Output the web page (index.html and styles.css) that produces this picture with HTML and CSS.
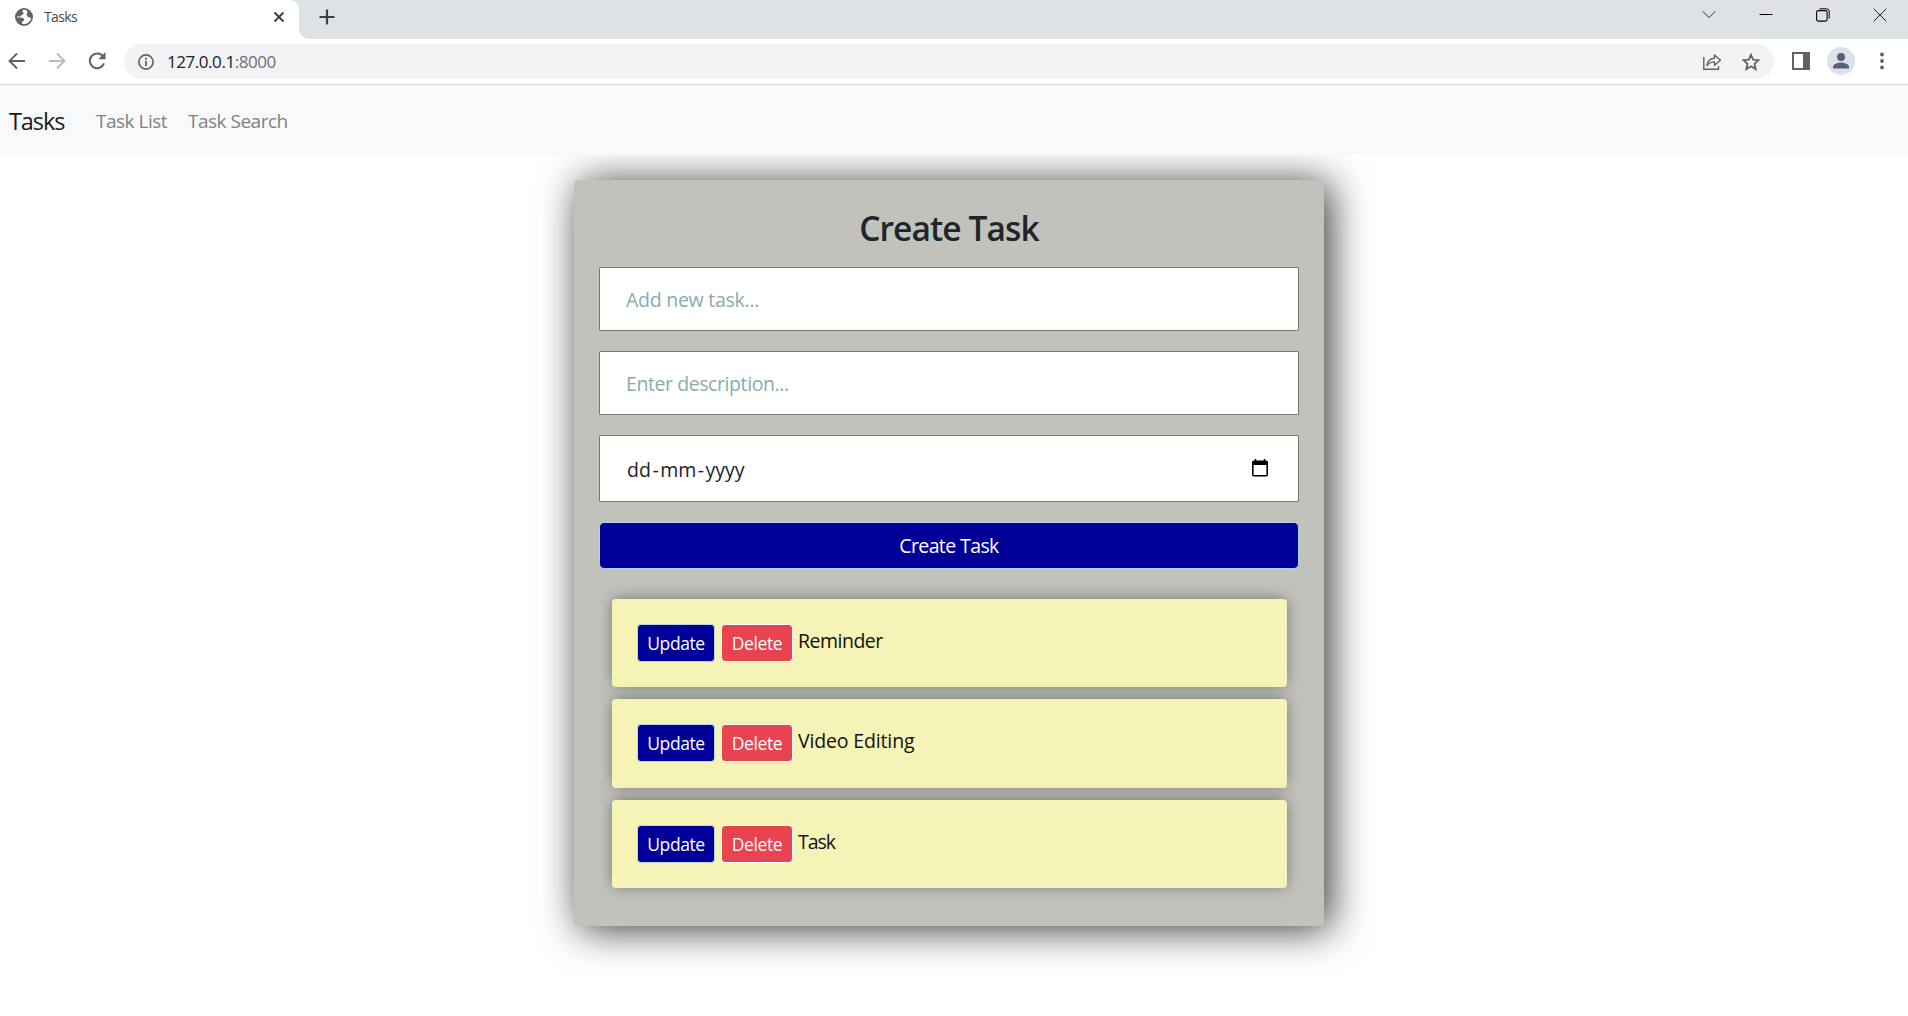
FILE: index.html
```html
<!DOCTYPE html>
<html lang="en">
<head>
<meta charset="utf-8">
<title>Tasks</title>
<link rel="stylesheet" href="styles.css">
</head>
<body>
<header class="browser">
  <div class="tabstrip">
    <div class="tab">
      <svg class="globe" width="18" height="18" viewBox="0 0 18 18"><circle cx="9" cy="9" r="8.1" fill="#fff" stroke="#5f6368" stroke-width="1.8"/><path d="M9 1c-1.500 1-2 2.500-1 3.500 1.200.500.500 1.800-.500 2C6.500 7 5.500 7.500 5.500 8.500H1c0-4 3.500-7.500 8-7.500zM11 1.500l1.500 2.500-1 2.500 1.500 2.500 2 .500 1.500 1.500c1-3-.500-7-5.500-9.500zM1 9.500h5.500c2 .500 3 1.500 2.500 3l-2 1.500v3C4 16 1 13.500 1 9.500z" fill="#5f6368"/></svg>
      <span class="tab-title">Tasks</span>
      <svg class="tab-close" width="12" height="12" viewBox="0 0 12 12"><path d="M1.500 1.500l9 9M10.500 1.500l-9 9" stroke="#3c4043" stroke-width="1.900"/></svg>
    </div>
    <svg class="newtab" width="16" height="16" viewBox="0 0 16 16"><path d="M8 .5v15M.5 8h15" stroke="#3c4043" stroke-width="2.200"/></svg>
    <div class="window-buttons">
      <svg width="14" height="14" viewBox="0 0 14 14"><path d="M.8 3.500L7 9.500l6.200-6" fill="none" stroke="#333"/></svg>
      <svg width="14" height="14" viewBox="0 0 14 14"><path d="M.5 6.500h13" stroke="#000"/></svg>
      <svg width="14" height="14" viewBox="0 0 14 14"><rect x=".6" y="2.600" width="10.500" height="10.500" rx="1.800" fill="none" stroke="#000" stroke-width="1.100"/><path d="M3.500.8h7a2.700 2.700 0 0 1 2.700 2.700v7" fill="none" stroke="#000"/></svg>
      <svg width="14" height="14" viewBox="0 0 14 14"><path d="M.8.8l12.400 12.400M13.200.8L.8 13.200" stroke="#222"/></svg>
    </div>
  </div>
  <div class="toolbar">
    <svg class="nav-icon" width="18" height="18" viewBox="0 0 18 18"><path d="M17 9H2M9 1.500L1.500 9 9 16.500" fill="none" stroke="#5f6368" stroke-width="1.900"/></svg>
    <svg class="nav-icon" width="18" height="18" viewBox="0 0 18 18"><path d="M1 9h15M9 1.500L16.500 9 9 16.500" fill="none" stroke="#b9bbbd" stroke-width="1.900"/></svg>
    <svg class="nav-icon reload" width="18" height="18" viewBox="0 0 18 18"><path d="M15.200 4.800A7.300 7.300 0 1 0 16 11.300" fill="none" stroke="#5f6368" stroke-width="2"/><path d="M17.500 0v7.200h-7.200z" fill="#5f6368"/></svg>
    <div class="omnibox">
      <svg width="16" height="16" viewBox="0 0 16 16"><circle cx="8" cy="8" r="7.100" fill="none" stroke="#5f6368" stroke-width="1.700"/><path d="M8 7v5M8 3.700v2" stroke="#5f6368" stroke-width="1.800"/></svg>
      <span class="url">127.0.0.1<span class="port">:8000</span></span>
      <svg class="share" width="20" height="18" viewBox="0 0 20 18"><path d="M1.800 4v12.300h14.700V13" fill="none" stroke="#5f6368" stroke-width="1.400"/><path d="M5 12.500c.5-4.500 3.200-7 7.500-7.200V2l6 5.200-6 5V8.900C9.200 8.900 7 10 5 12.500z" fill="none" stroke="#5f6368" stroke-width="1.400" stroke-linejoin="round"/></svg>
      <svg class="star" width="18" height="18" viewBox="0 0 18 18"><path d="M9 1.800l2.200 4.900 5.300.5-4 3.600 1.200 5.300L9 13.300l-4.700 2.800 1.200-5.300-4-3.600 5.300-.5z" fill="none" stroke="#5f6368" stroke-width="1.800"/></svg>
    </div>
    <svg class="panel" width="18" height="18" viewBox="0 0 18 18"><path d="M1 1h16v16H1z" fill="#fff" stroke="#5f6368" stroke-width="2"/><path d="M11 1h6v16h-6z" fill="#5f6368"/></svg>
    <svg class="avatar" width="28" height="28" viewBox="0 0 28 28"><circle cx="14" cy="14" r="14" fill="#dee1e6"/><circle cx="14" cy="10" r="4" fill="#55617a"/><path d="M6 21.500v-1.500c0-3 5-4.500 8-4.500s8 1.500 8 4.500v1.500z" fill="#55617a"/></svg>
    <svg class="menu" width="4" height="18" viewBox="0 0 4 18"><circle cx="2" cy="2.500" r="1.900" fill="#5f6368"/><circle cx="2" cy="9" r="1.900" fill="#5f6368"/><circle cx="2" cy="15.500" r="1.900" fill="#5f6368"/></svg>
  </div>
</header>
<nav class="navbar">
  <a class="brand">Tasks</a>
  <a class="link link-list">Task List</a>
  <a class="link link-search">Task Search</a>
</nav>
<main class="card">
  <h1 class="heading"><span>Create Task</span></h1>
  <div class="field"><span class="ph-task">Add new task...</span></div>
  <div class="field"><span class="ph-desc">Enter description...</span></div>
  <div class="field date"><span class="date-text">dd<span class="dash">-</span>mm<span class="dash">-</span>yyyy</span>
    <svg class="calendar" width="16" height="18" viewBox="0 0 16 18"><path d="M3.500 0v3M12.500 0v3" stroke="#000" stroke-width="1.500"/><rect x=".8" y="2.300" width="14.400" height="14.500" rx="1" fill="none" stroke="#000" stroke-width="1.600"/><path d="M1 2h14v4H1z"/></svg>
  </div>
  <button class="submit"><span>Create Task</span></button>
  <ul class="tasks">
    <li class="task"><a class="btn update"><span>Update</span></a><a class="btn delete"><span>Delete</span></a><span class="name reminder">Reminder</span></li>
    <li class="task tall"><a class="btn update"><span>Update</span></a><a class="btn delete"><span>Delete</span></a><span class="name video">Video Editing</span></li>
    <li class="task"><a class="btn update"><span>Update</span></a><a class="btn delete"><span>Delete</span></a><span class="name plain">Task</span></li>
  </ul>
</main>
</body>
</html>
```
FILE: styles.css
```css
* { box-sizing: border-box; }
body { margin: 0; height: 1016px; overflow: hidden; background: #fff; font-family: "Open Sans", "Noto Sans", sans-serif; color: #212529; }
svg { display: block; flex: none; }
span, a { white-space: nowrap; }

.browser { position: relative; z-index: 1; height: 85px; background: #fff; border-bottom: 1px solid #d5d7da; }
.tabstrip { display: flex; height: 39px; background: #dee1e6; }
.tab { display: flex; align-items: center; width: 299px; padding: 0 14px 5px 15px; background: #fff; border-top-right-radius: 9px; position: relative; }
.tab::after { content: ""; position: absolute; left: 100%; bottom: 0; width: 10px; height: 10px; background: radial-gradient(circle at 100% 0, transparent 9.500px, #fff 10px); }
.tab-title { margin-left: 11px; padding-bottom: 1px; font-size: 14px; letter-spacing: -.6px; color: #45494d; }
.tab-close { margin-left: auto; }
.newtab { margin: 9px 0 0 20px; }
.window-buttons { display: flex; gap: 43px; margin: 8px 21px 0 auto; }

.toolbar { display: flex; align-items: center; height: 45px; padding-right: 24px; }
.nav-icon { margin: 0 0 1px 8px; }
.nav-icon + .nav-icon { margin-left: 22px; }
.omnibox { display: flex; align-items: center; width: 1650px; height: 35px; margin-left: 18px; padding: 0 14px; border-radius: 18px; background: #f1f3f4; }
.url { margin-left: 13px; font-size: 17px; letter-spacing: -.45px; color: #202124; }
.port { color: #6b6f73; }
.share { margin-left: auto; }
.star { margin-left: 20px; }
.panel { margin: 0 0 1px 18px; }
.avatar { margin: 0 0 1px 17px; }
.menu { margin: 0 0 1px auto; }

.navbar { position: relative; z-index: 1; display: flex; align-items: center; height: 70px; padding: 1px 0 0 9px; background: #f8f9fa; }
.brand { width: 87px; font-size: 23.500px; color: #1a1a1a; letter-spacing: -1.100px; }
.link { padding-top: 1px; font-size: 19px; letter-spacing: -.5px; color: #808182; }
.link-list { width: 92px; }

.card { width: 750px; height: 746px; margin: 25px 0 0 574px; padding: 25px; border-radius: 4px; background: #c2c2bd; box-shadow: 6px 3px 40px rgba(0,0,0,.8); }
.heading { margin: 0; height: 62px; font-size: 33.500px; line-height: 46px; font-weight: 600; letter-spacing: -.9px; text-align: center; }
.field { display: flex; align-items: center; height: 64px; margin-bottom: 20px; padding: 0 26px; border: 1px solid #767676; border-radius: 1px; background: #fff; font-size: 19.500px; color: #86adb0; }
.ph-task { letter-spacing: -.26px; }
.ph-desc { letter-spacing: -.42px; }
.date { height: 67px; color: #212529; justify-content: space-between; padding: 0 30px 0 27px; }
.date-text { padding-top: 1px; }
.dash { padding: 0 1.500px; }
.calendar { margin-bottom: 2px; }
.submit { display: block; width: 100%; height: 47px; padding: 0; border: 1px solid #add8e6; border-radius: 5px; background: #009; color: #fff; font: 500 19.500px/43px "Open Sans", sans-serif; letter-spacing: -.6px; }
.tasks { display: flex; flex-direction: column; gap: 12px; margin: 30px 12px 0 13px; padding: 0; list-style: none; }
.task { display: flex; height: 88px; padding: 25px; border-radius: 4px; background: #f5f4b6; box-shadow: 0 -1px 15px -2px rgba(0,0,0,.5); }
.task.tall { height: 89px; }
.btn { display: flex; align-items: center; justify-content: center; height: 38px; border-radius: 4px; font-size: 17.500px; letter-spacing: -.4px; color: #fff; }
.update { width: 78px; border: 1px solid #add8e6; background: #009; }
.delete { width: 72px; margin-left: 6px; border: 1px solid #fff; background: #e84350; }
.name { margin-left: 5px; font-size: 19.500px; line-height: 34px; color: #111; }
.reminder { letter-spacing: -.5px; }
.video { letter-spacing: -.15px; }
.plain { letter-spacing: -1px; }
```
